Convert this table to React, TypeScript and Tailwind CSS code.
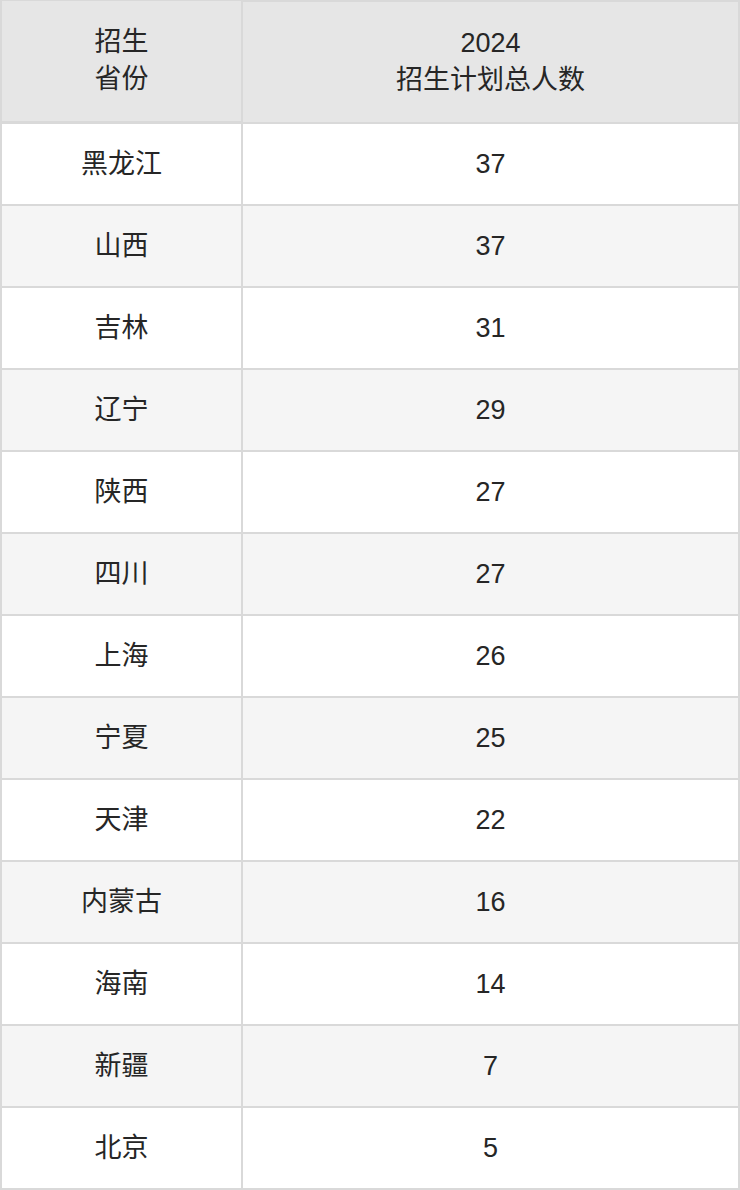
const rows: [string, string][] = [
  ["黑龙江", "37"],
  ["山西", "37"],
  ["吉林", "31"],
  ["辽宁", "29"],
  ["陕西", "27"],
  ["四川", "27"],
  ["上海", "26"],
  ["宁夏", "25"],
  ["天津", "22"],
  ["内蒙古", "16"],
  ["海南", "14"],
  ["新疆", "7"],
  ["北京", "5"],
]

export default function App() {
  return (
    <div
      className="w-[740px] text-[27px] leading-[37px] text-[#262626]"
      style={{ fontFamily: '"Liberation Sans", "Noto Sans CJK SC", sans-serif' }}
    >
      <div className="grid grid-cols-[239px_1fr] gap-[2px] p-[2px] bg-[#d9d9d9]">
        <div className="h-[120px] bg-[#e6e6e6] flex flex-col items-center justify-center -mt-[1px]">
          <span>招生</span>
          <span>省份</span>
        </div>
        <div className="h-[120px] bg-[#e6e6e6] flex flex-col items-center justify-center">
          <span className="-mt-[1px]">2024</span>
          <span className="-mb-[1px]">招生计划总人数</span>
        </div>
        {rows.map(([province, count], i) => {
          const bg = i % 2 === 0 ? "bg-white" : "bg-[#f5f5f5]"
          return [
            <div key={province + "-p"} className={`h-[80px] flex items-center justify-center ${bg}`}>
              {province}
            </div>,
            <div key={province + "-c"} className={`h-[80px] flex items-center justify-center ${bg}`}>
              {count}
            </div>,
          ]
        })}
      </div>
    </div>
  )
}
